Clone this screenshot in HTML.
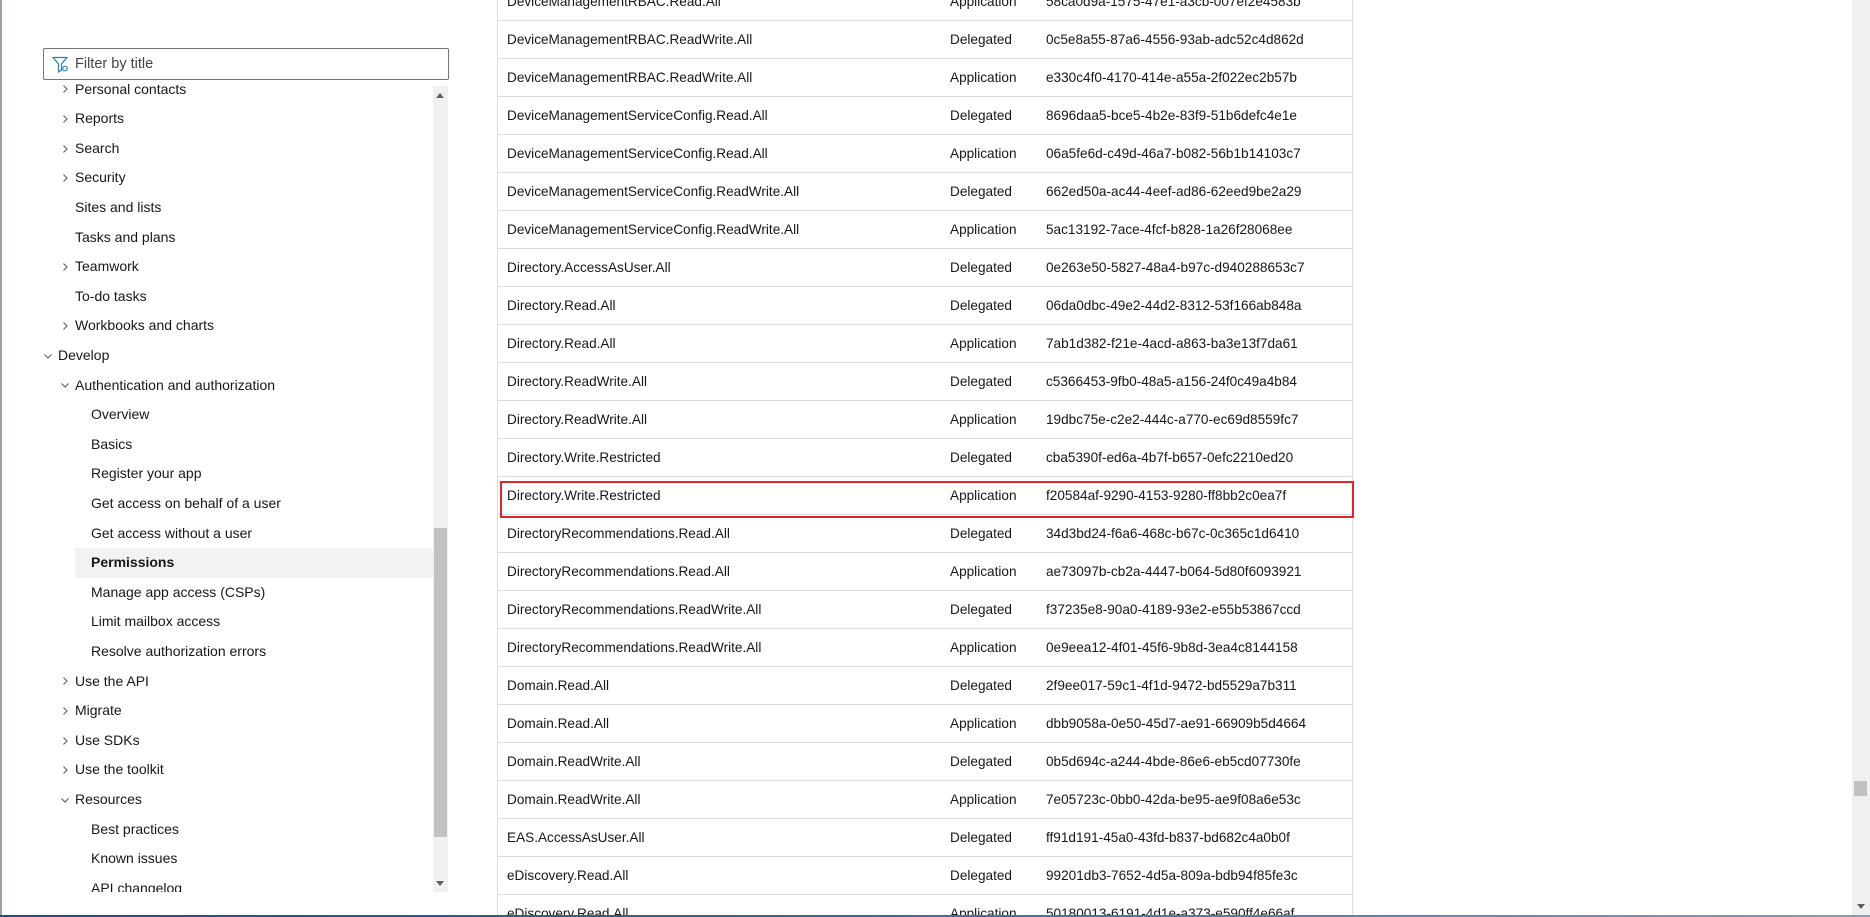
<!DOCTYPE html>
<html><head><meta charset="utf-8"><style>
*{box-sizing:border-box;margin:0;padding:0}
body{width:1870px;height:917px;overflow:hidden;background:#fff;font-family:"Liberation Sans",sans-serif;color:#171717;position:relative}
.lb{position:absolute;left:0;top:0;width:2px;height:917px;background:#9aa0aa}
.filter{position:absolute;left:43px;top:48px;width:406px;height:32px;border:1px solid #767676;border-radius:2px;font-size:14.5px;line-height:30px;padding-left:31px;color:#444}
.side{position:absolute;left:43px;top:83px;width:390px;height:809px;overflow:hidden}
.it{position:absolute;height:29.6px;line-height:29.6px;font-size:14px;white-space:nowrap}
.ch{position:absolute;width:10px;height:10px}
.sbar{position:absolute;left:433px;top:86px;width:15px;height:806px;background:#f0f0f0}
.sthumb{position:absolute;left:434px;top:528px;width:13px;height:309px;background:#c1c1c1}
.tbl{position:absolute;left:497px;top:0;width:856px;height:917px;border-left:1px solid #ddd;border-right:1px solid #ddd;overflow:hidden}
.row{position:absolute;left:0;width:856px;height:38px;border-bottom:1px solid #dcdcdc;font-size:13.6px;line-height:37px}
.row span{position:absolute;white-space:nowrap}
.a{left:9px}.b{left:452px}.c{left:548px}
.hl{position:absolute;left:500px;top:481px;width:854px;height:37px;border:2px solid #e0262b}
.psb{position:absolute;left:1852px;top:0;width:18px;height:917px;background:#f0f0f0}
.pth{position:absolute;left:1854px;top:781px;width:13px;height:15px;background:#c1c1c1}
</style></head><body>
<svg width="0" height="0" style="position:absolute"><defs>
<symbol id="r" viewBox="0 0 10 10"><path d="M3.5 1.5L7 5L3.5 8.5" fill="none" stroke="#555" stroke-width="1"/></symbol>
<symbol id="d" viewBox="0 0 10 10"><path d="M1.5 3.5L5 7L8.5 3.5" fill="none" stroke="#555" stroke-width="1"/></symbol>
</defs></svg>
<div class="lb"></div>
<div class="filter"><svg style="position:absolute;left:8px;top:7px" width="18" height="17" viewBox="0 0 18 17"><path d="M1 1.5h14l-5.5 6.5v6l-3 2v-8z" fill="none" stroke="#2b7cd3" stroke-width="1.2"/><circle cx="13" cy="12.5" r="2.3" fill="none" stroke="#2b7cd3" stroke-width="1.2"/></svg>Filter by title</div>
<div class="side">
<div style="position:absolute;left:32px;top:465.2px;width:358px;height:29.6px;background:#f2f2f2"></div>
<svg class="ch" style="left:17px;top:1.4px"><use href="#r"/></svg><div class="it" style="left:32px;top:-8.4px">Personal contacts</div>
<svg class="ch" style="left:17px;top:31px"><use href="#r"/></svg><div class="it" style="left:32px;top:21.2px">Reports</div>
<svg class="ch" style="left:17px;top:60.6px"><use href="#r"/></svg><div class="it" style="left:32px;top:50.8px">Search</div>
<svg class="ch" style="left:17px;top:90.2px"><use href="#r"/></svg><div class="it" style="left:32px;top:80.4px">Security</div>
<div class="it" style="left:32px;top:110px">Sites and lists</div>
<div class="it" style="left:32px;top:139.6px">Tasks and plans</div>
<svg class="ch" style="left:17px;top:179px"><use href="#r"/></svg><div class="it" style="left:32px;top:169.2px">Teamwork</div>
<div class="it" style="left:32px;top:198.8px">To-do tasks</div>
<svg class="ch" style="left:17px;top:238.2px"><use href="#r"/></svg><div class="it" style="left:32px;top:228.4px">Workbooks and charts</div>
<svg class="ch" style="left:0px;top:267.8px"><use href="#d"/></svg><div class="it" style="left:15px;top:258px">Develop</div>
<svg class="ch" style="left:17px;top:297.4px"><use href="#d"/></svg><div class="it" style="left:32px;top:287.6px">Authentication and authorization</div>
<div class="it" style="left:48px;top:317.2px">Overview</div>
<div class="it" style="left:48px;top:346.8px">Basics</div>
<div class="it" style="left:48px;top:376.4px">Register your app</div>
<div class="it" style="left:48px;top:406px">Get access on behalf of a user</div>
<div class="it" style="left:48px;top:435.6px">Get access without a user</div>
<div class="it" style="left:48px;top:465.2px;font-weight:bold">Permissions</div>
<div class="it" style="left:48px;top:494.8px">Manage app access (CSPs)</div>
<div class="it" style="left:48px;top:524.4px">Limit mailbox access</div>
<div class="it" style="left:48px;top:554px">Resolve authorization errors</div>
<svg class="ch" style="left:17px;top:593.4px"><use href="#r"/></svg><div class="it" style="left:32px;top:583.6px">Use the API</div>
<svg class="ch" style="left:17px;top:623px"><use href="#r"/></svg><div class="it" style="left:32px;top:613.2px">Migrate</div>
<svg class="ch" style="left:17px;top:652.6px"><use href="#r"/></svg><div class="it" style="left:32px;top:642.8px">Use SDKs</div>
<svg class="ch" style="left:17px;top:682.2px"><use href="#r"/></svg><div class="it" style="left:32px;top:672.4px">Use the toolkit</div>
<svg class="ch" style="left:17px;top:711.8px"><use href="#d"/></svg><div class="it" style="left:32px;top:702px">Resources</div>
<div class="it" style="left:48px;top:731.6px">Best practices</div>
<div class="it" style="left:48px;top:761.2px">Known issues</div>
<div class="it" style="left:48px;top:790.8px">API changelog</div>
</div>
<div class="sbar"><div style="position:absolute;left:3px;top:7px;border:4px solid transparent;border-bottom:5px solid #606060;border-top:0"></div><div style="position:absolute;left:3px;bottom:6px;border:4px solid transparent;border-top:5px solid #606060;border-bottom:0"></div></div>
<div class="sthumb"></div>
<div class="tbl">
<div class="row" style="top:-17px"><span class="a">DeviceManagementRBAC.Read.All</span><span class="b">Application</span><span class="c">58ca0d9a-1575-47e1-a3cb-007ef2e4583b</span></div>
<div class="row" style="top:21px"><span class="a">DeviceManagementRBAC.ReadWrite.All</span><span class="b">Delegated</span><span class="c">0c5e8a55-87a6-4556-93ab-adc52c4d862d</span></div>
<div class="row" style="top:59px"><span class="a">DeviceManagementRBAC.ReadWrite.All</span><span class="b">Application</span><span class="c">e330c4f0-4170-414e-a55a-2f022ec2b57b</span></div>
<div class="row" style="top:97px"><span class="a">DeviceManagementServiceConfig.Read.All</span><span class="b">Delegated</span><span class="c">8696daa5-bce5-4b2e-83f9-51b6defc4e1e</span></div>
<div class="row" style="top:135px"><span class="a">DeviceManagementServiceConfig.Read.All</span><span class="b">Application</span><span class="c">06a5fe6d-c49d-46a7-b082-56b1b14103c7</span></div>
<div class="row" style="top:173px"><span class="a">DeviceManagementServiceConfig.ReadWrite.All</span><span class="b">Delegated</span><span class="c">662ed50a-ac44-4eef-ad86-62eed9be2a29</span></div>
<div class="row" style="top:211px"><span class="a">DeviceManagementServiceConfig.ReadWrite.All</span><span class="b">Application</span><span class="c">5ac13192-7ace-4fcf-b828-1a26f28068ee</span></div>
<div class="row" style="top:249px"><span class="a">Directory.AccessAsUser.All</span><span class="b">Delegated</span><span class="c">0e263e50-5827-48a4-b97c-d940288653c7</span></div>
<div class="row" style="top:287px"><span class="a">Directory.Read.All</span><span class="b">Delegated</span><span class="c">06da0dbc-49e2-44d2-8312-53f166ab848a</span></div>
<div class="row" style="top:325px"><span class="a">Directory.Read.All</span><span class="b">Application</span><span class="c">7ab1d382-f21e-4acd-a863-ba3e13f7da61</span></div>
<div class="row" style="top:363px"><span class="a">Directory.ReadWrite.All</span><span class="b">Delegated</span><span class="c">c5366453-9fb0-48a5-a156-24f0c49a4b84</span></div>
<div class="row" style="top:401px"><span class="a">Directory.ReadWrite.All</span><span class="b">Application</span><span class="c">19dbc75e-c2e2-444c-a770-ec69d8559fc7</span></div>
<div class="row" style="top:439px"><span class="a">Directory.Write.Restricted</span><span class="b">Delegated</span><span class="c">cba5390f-ed6a-4b7f-b657-0efc2210ed20</span></div>
<div class="row" style="top:477px"><span class="a">Directory.Write.Restricted</span><span class="b">Application</span><span class="c">f20584af-9290-4153-9280-ff8bb2c0ea7f</span></div>
<div class="row" style="top:515px"><span class="a">DirectoryRecommendations.Read.All</span><span class="b">Delegated</span><span class="c">34d3bd24-f6a6-468c-b67c-0c365c1d6410</span></div>
<div class="row" style="top:553px"><span class="a">DirectoryRecommendations.Read.All</span><span class="b">Application</span><span class="c">ae73097b-cb2a-4447-b064-5d80f6093921</span></div>
<div class="row" style="top:591px"><span class="a">DirectoryRecommendations.ReadWrite.All</span><span class="b">Delegated</span><span class="c">f37235e8-90a0-4189-93e2-e55b53867ccd</span></div>
<div class="row" style="top:629px"><span class="a">DirectoryRecommendations.ReadWrite.All</span><span class="b">Application</span><span class="c">0e9eea12-4f01-45f6-9b8d-3ea4c8144158</span></div>
<div class="row" style="top:667px"><span class="a">Domain.Read.All</span><span class="b">Delegated</span><span class="c">2f9ee017-59c1-4f1d-9472-bd5529a7b311</span></div>
<div class="row" style="top:705px"><span class="a">Domain.Read.All</span><span class="b">Application</span><span class="c">dbb9058a-0e50-45d7-ae91-66909b5d4664</span></div>
<div class="row" style="top:743px"><span class="a">Domain.ReadWrite.All</span><span class="b">Delegated</span><span class="c">0b5d694c-a244-4bde-86e6-eb5cd07730fe</span></div>
<div class="row" style="top:781px"><span class="a">Domain.ReadWrite.All</span><span class="b">Application</span><span class="c">7e05723c-0bb0-42da-be95-ae9f08a6e53c</span></div>
<div class="row" style="top:819px"><span class="a">EAS.AccessAsUser.All</span><span class="b">Delegated</span><span class="c">ff91d191-45a0-43fd-b837-bd682c4a0b0f</span></div>
<div class="row" style="top:857px"><span class="a">eDiscovery.Read.All</span><span class="b">Delegated</span><span class="c">99201db3-7652-4d5a-809a-bdb94f85fe3c</span></div>
<div class="row" style="top:895px"><span class="a">eDiscovery.Read.All</span><span class="b">Application</span><span class="c">50180013-6191-4d1e-a373-e590ff4e66af</span></div>
</div>
<div class="hl"></div>
<div class="psb"><div style="position:absolute;left:5px;bottom:8px;border:4px solid transparent;border-top:5px solid #606060;border-bottom:0"></div></div>
<div class="pth"></div>
<div style="position:absolute;left:0;top:915px;width:1870px;height:2px;background:linear-gradient(90deg,#2a4a80,#3a5f9a 40%,#8a9ab0)"></div>
</body></html>
